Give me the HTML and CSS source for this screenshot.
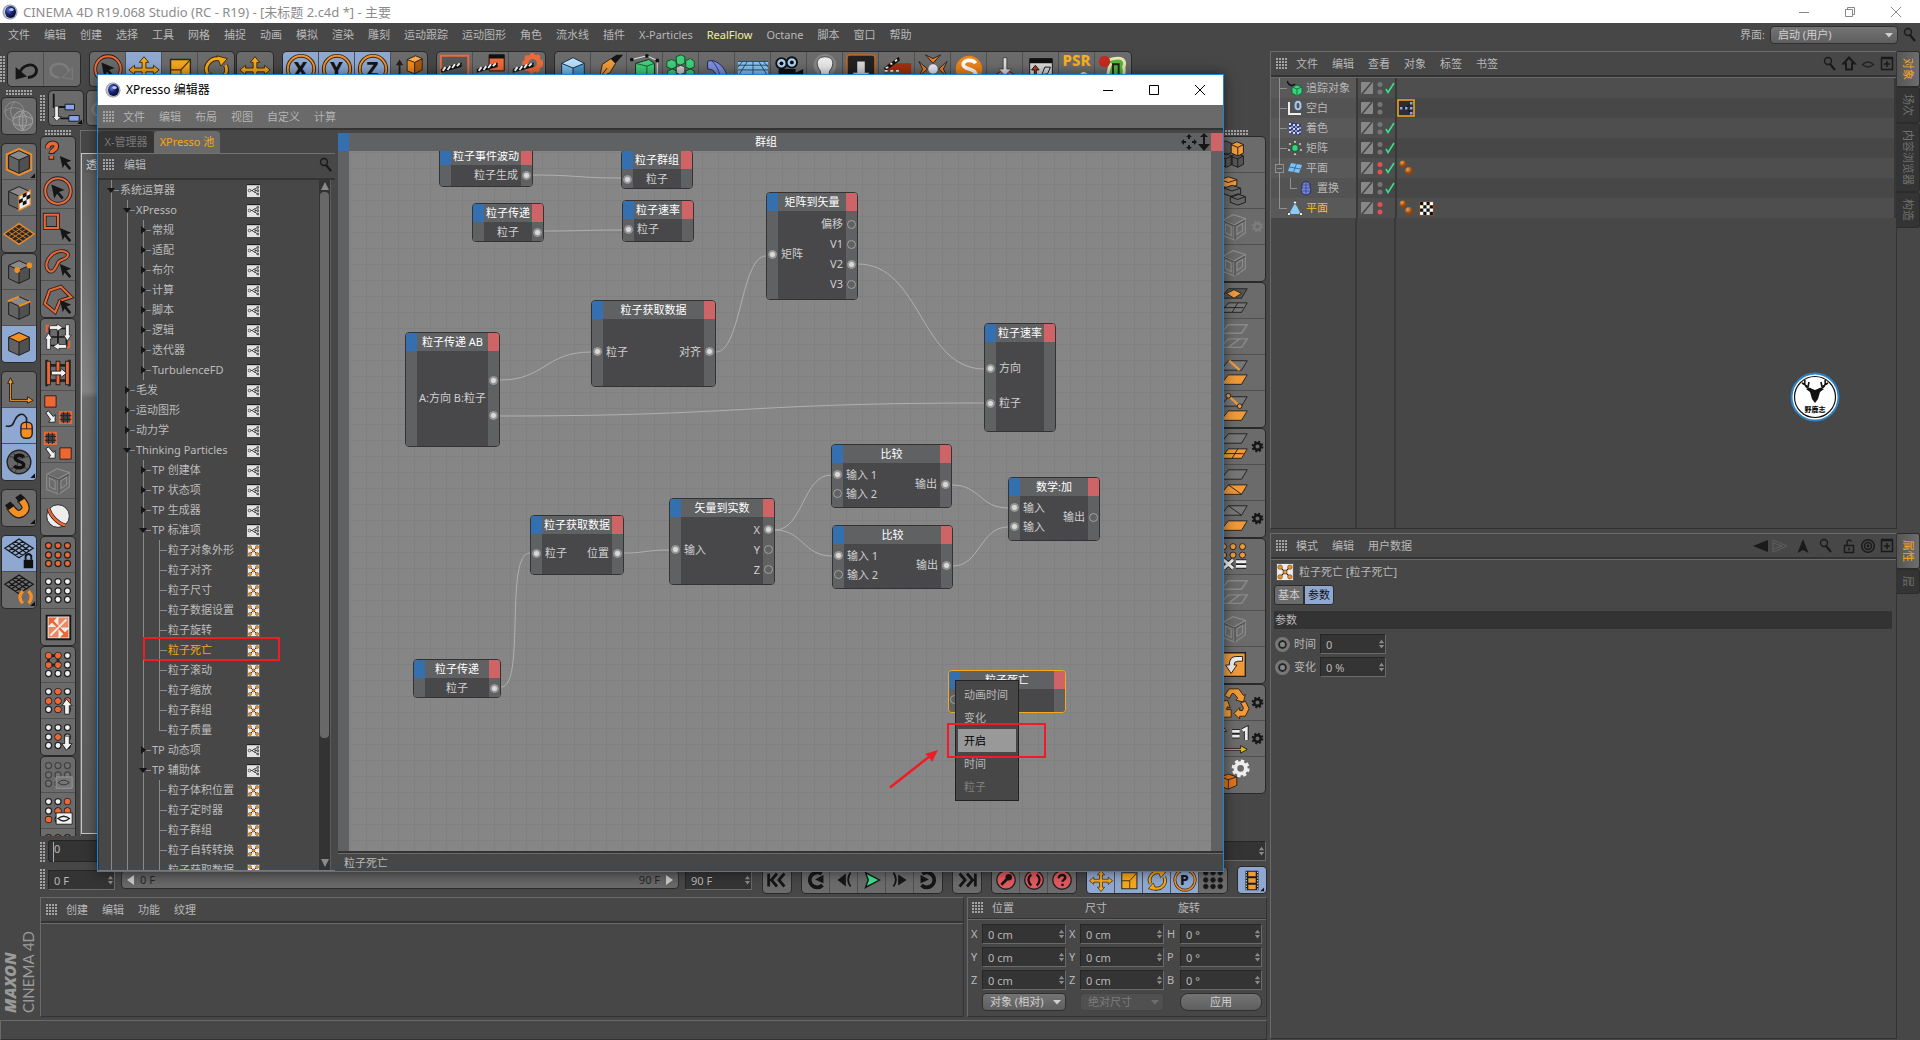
FILE: index.html
```html
<!DOCTYPE html>
<html lang="zh-CN">
<head>
<meta charset="utf-8">
<title>CINEMA 4D R19.068 Studio</title>
<link rel="stylesheet" href="styles.css">
</head>
<body>
<svg class="sprite" width="0" height="0" aria-hidden="true">
  <defs>
    <radialGradient id="g-logo" cx=".35" cy=".35" r=".7"><stop offset="0" stop-color="#5a78d8"/><stop offset=".5" stop-color="#1b2470"/><stop offset="1" stop-color="#05082c"/></radialGradient>
    <radialGradient id="g-steel"><stop offset=".6" stop-color="#e8eaf2"/><stop offset="1" stop-color="#8c90a0"/></radialGradient>
    <radialGradient id="g-ball" cx=".35" cy=".3"><stop offset="0" stop-color="#f0a050"/><stop offset="1" stop-color="#8a4410"/></radialGradient>
  </defs>
  <symbol id="c4d" viewBox="0 0 16 16"><circle cx="8" cy="8" r="7.500" fill="url(#g-steel)"/><ellipse cx="8.500" cy="8" rx="5.500" ry="6" fill="url(#g-logo)"/><ellipse cx="9.500" cy="5.500" rx="2.200" ry="1.500" fill="#b9c9f5"/></symbol>
  <symbol id="min" viewBox="0 0 12 12"><path d="M1 6.500h10" stroke="currentColor"/></symbol>
  <symbol id="max" viewBox="0 0 12 12"><path d="M1.500 1.500h9v9h-9z" fill="none" stroke="currentColor"/></symbol>
  <symbol id="restore" viewBox="0 0 12 12"><path d="M1.500 3.500h7v7h-7zM3.500 3V1.500h7v7H9" fill="none" stroke="currentColor"/></symbol>
  <symbol id="close" viewBox="0 0 12 12"><path d="M1 1l10 10M11 1L1 11" stroke="currentColor"/></symbol>
  <symbol id="find" viewBox="0 0 16 16"><circle cx="6" cy="5" r="3.500" fill="none" stroke="#1a1a1a" stroke-width="1.400"/><path d="M8 8l5 6" stroke="#1a1a1a" stroke-width="2.200"/></symbol>
  <symbol id="home" viewBox="0 0 16 16"><path d="M8 1.500l5.500 6H11v6H5v-6H2.500z" fill="none" stroke="#1a1a1a" stroke-width="2"/></symbol>
  <symbol id="eye" viewBox="0 0 16 16"><path d="M2.500 8.500q5.500-5 11 0q-5.500 5-11 0z" fill="none" stroke="#222" stroke-width="1.200"/></symbol>
  <symbol id="plus" viewBox="0 0 16 16"><path d="M2.500 2.500h11v11h-11zM2 1.500h12M8 5v6M5 8h6" fill="none" stroke="#1a1a1a" stroke-width="1.500"/></symbol>
  <symbol id="tri-l" viewBox="0 0 16 16"><path d="M15 2v12L0 8z" fill="#1a1a1a"/></symbol>
  <symbol id="tri-ghost" viewBox="0 0 16 16"><path d="M1 2v12l14-6zM1 5l9 3-9 3" fill="none" stroke="#5e5e5e"/></symbol>
  <symbol id="tri-up" viewBox="0 0 16 16"><path d="M8 1l5.500 14L8 12l-5.500 3z" fill="#1a1a1a"/></symbol>
  <symbol id="lock" viewBox="0 0 16 16"><path d="M3.500 7.500h9v7h-9zM6 7V3.500q2.500-3 4.500 0M8 9.500v3" fill="none" stroke="#1a1a1a" stroke-width="1.400"/></symbol>
  <symbol id="target" viewBox="0 0 16 16"><g fill="none" stroke="#1a1a1a" stroke-width="1.500"><circle cx="8" cy="8" r="6.300"/><circle cx="8" cy="8" r="3.500"/></g><circle cx="8" cy="8" r="1.400" fill="#1a1a1a"/></symbol>
  <symbol id="spin" viewBox="0 0 8 12"><path d="M4 1l3 4H1zM4 11l3-4H1z" fill="#8a8a8a"/></symbol>
  <symbol id="drop" viewBox="0 0 10 6"><path d="M1 1h8L5 5.500z" fill="currentColor"/></symbol>
  <symbol id="xp" viewBox="0 0 13 13"><path fill="#e4e4e4" d="M0 0h13v13H0z"/><path fill="#222" d="M0 0h13v1.200H0z"/><path d="M3 6.500h3l5-3.500M6 6.500l5 4M6 6.500h5" stroke="#333" fill="none" stroke-width=".8"/><g fill="#eee" stroke="#222" stroke-width=".7"><circle cx="2.500" cy="6.500" r="1.300"/><path d="M5 6.500l3-2v4z"/><path d="M10 2.600h1.600v1.600H10zM10 5.800h1.600v1.600H10zM10 9.200h1.600v1.600H10z"/></g></symbol>
  <symbol id="tp" viewBox="0 0 13 13"><path fill="#ededed" stroke="#555" stroke-width=".8" d="M.4.400h12.200v12.200H.4z"/><path d="M3 3l7 7M10 3l-7 7" stroke="#222" stroke-width=".9"/><g fill="#e8922a" stroke="#5a3408" stroke-width=".4"><circle cx="3" cy="3" r="1.600"/><circle cx="10" cy="3" r="1.600"/><circle cx="6.500" cy="6.500" r="1.500"/><circle cx="3" cy="10" r="1.600"/><circle cx="10" cy="10" r="1.600"/></g></symbol>

  <!-- top toolbar -->
  <symbol id="undo" viewBox="0 0 36 36"><path d="M11 23c2-9 15-13 18-5 1 6-4 9-9 9" fill="none" stroke="#161616" stroke-width="3"/><path d="M7 16v13l12-3z" fill="#161616"/></symbol>
  <symbol id="redo" viewBox="0 0 36 36"><g opacity=".5" fill="none" stroke="#909090"><path d="M25 20c-2-9-16-10-19-2-1 6 4 9 9 9" stroke-width="2.500"/><path d="M29 17v12l-11-2z"/></g></symbol>
  <symbol id="sel" viewBox="0 0 36 36"><circle cx="18" cy="18" r="13.500" fill="none" stroke="#222" stroke-width="4"/><circle cx="18" cy="18" r="13.500" fill="none" stroke="#ee6a3a" stroke-width="2.200"/><path d="M11 11l14 6-6 2 5 6-2 2-5-6-3 5z" fill="#161616"/></symbol>
  <symbol id="move" viewBox="0 0 36 36"><path d="M18 5l5 6h-3v6h8v-3l6 5-6 5v-3h-8v7h3l-5 6-5-6h3v-7H8v3l-6-5 6-5v3h8v-6h-3z" fill="#f6a81c" stroke="#3a2a08"/></symbol>
  <symbol id="scale" viewBox="0 0 36 36"><path d="M8 8h21v22H8z" fill="#f6a81c" stroke="#2a2a2a" stroke-width="1.500"/><path d="M8 19h11v11M19 19l10-11" fill="none" stroke="#4a3208" stroke-width="1.300"/></symbol>
  <symbol id="rot" viewBox="0 0 36 36"><g fill="none" stroke="#3a2a08" stroke-width="5"><path d="M9 23A11 11 0 0 1 23 8M28 14A11 11 0 0 1 14 29"/></g><path d="M19 4l11 3-7 8zM17 33L6 30l7-8z" fill="#f6a81c" stroke="#3a2a08"/><g fill="none" stroke="#f6a81c" stroke-width="3"><path d="M9 23A11 11 0 0 1 23 8M28 14A11 11 0 0 1 14 29"/></g></symbol>
  <symbol id="ring" viewBox="0 0 36 36"><circle cx="18" cy="18" r="14" fill="none" stroke="#3a2a08" stroke-width="4"/><circle cx="18" cy="18" r="14" fill="none" stroke="#f09030" stroke-width="2"/></symbol>
  <symbol id="ocube" viewBox="0 0 36 36"><path d="M8 8l4 6H9v14H7V14H4z" fill="#222"/><path d="M16 8l9-4 7 3-8 4z" fill="#ffa94a"/><path d="M16 8l8 3v12l-8-3z" fill="#f08a1e"/><path d="M24 11l8-4v12l-8 4z" fill="#b05a08"/><path d="M16 8l9-4 7 3v12l-8 4-8-3zM16 8l8 3v12M24 11l8-4" fill="none" stroke="#222"/></symbol>
  <symbol id="clap" viewBox="0 0 36 36"><path d="M3 4h29v26H3z" fill="#585858" stroke="#ee6a3a" stroke-width="2"/><path d="M3 18l22-7v5L3 22z" fill="#111"/><path d="M5 20l3-4M10 19l3-4M15 17l3-4M20 15l3-3" stroke="#fff" stroke-width="2"/></symbol>
  <symbol id="clap2" viewBox="0 0 36 36"><path d="M16 3h16v17H16z" fill="#ee6a3a" stroke="#111"/><path d="M16 3h16v4H16z" fill="#111"/><path d="M3 18l22-7v5L3 22z" fill="#111"/><path d="M5 20l3-4M10 19l3-4M15 17l3-4M20 15l3-3" stroke="#fff" stroke-width="2"/></symbol>
  <symbol id="clap3" viewBox="0 0 36 36"><circle cx="24" cy="12" r="7" fill="none" stroke="#ee6a3a" stroke-width="5"/><circle cx="24" cy="12" r="9.500" fill="none" stroke="#ee6a3a" stroke-width="3" stroke-dasharray="4 3"/><path d="M3 18l22-7v5L3 22z" fill="#111"/><path d="M5 20l3-4M10 19l3-4M15 17l3-4M20 15l3-3" stroke="#fff" stroke-width="2"/></symbol>
  <symbol id="bcube" viewBox="0 0 36 36"><path d="M6 12l12-6 12 6-12 5z" fill="#b9e0fb"/><path d="M6 12l12 5v15L6 26z" fill="#79bff0"/><path d="M30 12l-12 5v15l12-6z" fill="#4f97cf"/><path d="M6 12l12-6 12 6v14l-12 6-12-6zM6 12l12 5 12-5M18 17v15" fill="none" stroke="#1c2c3a"/></symbol>
  <symbol id="pen" viewBox="0 0 36 36"><path d="M8 27l3-14 9-6 5 5-6 10z" fill="#f09a3a" stroke="#222"/><path d="M20 7l6-4h7l-8 9z" fill="#161616"/><path d="M9 26l7-9" stroke="#222"/></symbol>
  <symbol id="gcube" viewBox="0 0 36 36"><path d="M8 12l14-4 6 4v14l-8 5-12-4z" fill="#3fd07a" stroke="#222"/><path d="M8 12l12 3 8-3M20 15v15" fill="none" stroke="#175a30"/><path d="M4 8l16-4 11 5v16l-12 7" fill="none" stroke="#eee"/><g fill="#111"><circle cx="4" cy="8" r="2"/><circle cx="20" cy="4" r="2"/><circle cx="31" cy="9" r="2"/></g></symbol>
  <symbol id="array" viewBox="0 0 36 36"><g fill="#3fd07a" stroke="#164a2a"><path d="M13 5l5-2 4 2v7l-5 2-4-2zM23 9l5-2 4 3v6l-5 2-4-2zM3 10l5-2 5 2v6l-5 2-5-2zM4 20l5-2 4 2v7l-5 2-4-2zM23 20l5-2 4 2v7l-5 2-4-2zM13 25l5-2 4 2v7l-5 2-4-2z"/></g><path d="M13 16l5-2 4 2v6l-5 2-4-2z" fill="#ccc" stroke="#333"/></symbol>
  <symbol id="bend" viewBox="0 0 36 36"><path d="M8 10c8-4 20 6 22 20H18C18 22 14 18 8 18z" fill="#7d8fe0" stroke="#1c2446"/><path d="M12 9c5 4 9 12 10 21" fill="none" stroke="#2c3670"/></symbol>
  <symbol id="floor" viewBox="0 0 36 36"><path d="M2 10h32v20H2z" fill="#86c5f2"/><path d="M2 10h32M2 14h32M2 19h32M2 25h32M12 10L2 26M18 10v20M24 10l10 16M7 10l-5 6M29 10l5 6" stroke="#244a68" fill="none"/></symbol>
  <symbol id="cam" viewBox="0 0 36 36"><circle cx="10" cy="12" r="5.500" fill="#a9d2f3" stroke="#111" stroke-width="2"/><circle cx="21" cy="11" r="5.500" fill="#a9d2f3" stroke="#111" stroke-width="2"/><path d="M7 18h18v4l8-4v12l-8-4v6H7z" fill="#111"/><circle cx="10" cy="12" r="2"/><circle cx="21" cy="11" r="2"/></symbol>
  <symbol id="bulb" viewBox="0 0 36 36"><circle cx="18" cy="14" r="12" fill="#fff" opacity=".18"/><path d="M18 5c10 0 10 9 5 15l-1 6h-8l-1-6C8 14 8 5 18 5z" fill="#e9e9e9" stroke="#444"/></symbol>
  <symbol id="down" viewBox="0 0 36 36"><rect x="3" y="3" width="30" height="30" rx="3" fill="#222" stroke="#b8632a" stroke-width="2"/><path d="M14 10h8v12h5l-9 8-9-8h5z" fill="#d8d8d8"/></symbol>
  <symbol id="clap4" viewBox="0 0 36 36"><path d="M8 12h25v14H8z" fill="#a33010"/><path d="M4 20h18v12H4z" fill="#555"/><path d="M4 17L20 5l1 4L6 20z" fill="#111"/><path d="M6 17l3-1M11 13l2-1M16 10l2-2M5 20h18" stroke="#eee" stroke-width="2" stroke-dasharray="3 3"/></symbol>
  <symbol id="xpart" viewBox="0 0 36 36"><circle cx="18" cy="18" r="5" fill="#e7eaf5"/><g fill="#f07a1e" stroke="#222"><path d="M10 3l8 4 8-4-8 9zM3 10l4 8-4 8 9-8zM33 10l-4 8 4 8-9-8zM10 33l8-4 8 4-8-9z"/></g></symbol>
  <symbol id="disc" viewBox="0 0 36 36"><circle cx="18" cy="18" r="14" fill="#f08418"/><path d="M25 12c-3-5-14-4-13 2 1 5 12 3 13 9 0 6-12 7-15 1" fill="none" stroke="#fff" stroke-width="4"/></symbol>
  <symbol id="drop-d" viewBox="0 0 36 36"><path d="M6 25l12-7 12 7-12 8z" fill="#e2552a" stroke="#222"/><path d="M16 6h4v12h5l-7 7-7-7h5z" fill="#ddd" stroke="#444"/></symbol>
  <symbol id="panel" viewBox="0 0 36 36"><path d="M6 7h24v24H6z" fill="#d8d8d8" stroke="#111"/><path d="M6 7h24v5H6z" fill="#111"/><path d="M11 30V19H8l4-5 4 5h-3v11z" fill="#c03a1a" stroke="#111"/><path d="M19 24l3-8h6l-3 7z" fill="none" stroke="#111"/></symbol>
  <symbol id="char" viewBox="0 0 36 36"><path d="M14 6h14c6 6 4 20 0 26H12z" fill="#52b83a"/><path d="M10 10c14-6 22-4 20 5M29 14c2 8 0 14-3 18M16 12c-4 6-2 12-6 20" fill="none" stroke="#f0e2b8" stroke-width="3"/><circle cx="9" cy="10" r="6" fill="#c42a20"/><path d="M18 13h6v14h-6z" fill="none" stroke="#222" stroke-width="2"/></symbol>

  <!-- left rails -->
  <symbol id="globe" viewBox="0 0 36 36"><g fill="none" stroke="#909090"><circle cx="13" cy="13" r="10"/><path d="M3 13q10-8 20 0M13 3q-8 10 0 20"/></g><g fill="#777" stroke="#a2a2a2"><circle cx="22" cy="23" r="10.500"/><path d="M12 21q10-6 20 0M12 26q10 5 20 0M22 13q-8 10 0 20M22 13q8 10 0 20M22 13v20" fill="none"/></g></symbol>
  <symbol id="hier" viewBox="0 0 36 36"><path d="M5 3v14h14M12 29h10" fill="none" stroke="#161616" stroke-width="2"/><path d="M17 14h10v6H17zM21 26h11v6H21z" fill="#8aa4ee" stroke="#161616"/><path d="M6 16h4v11h3l-5 5-4-5h2z" fill="#eee" stroke="#333"/><path d="M35 35v-5l-5 5z" fill="#111"/></symbol>
  <symbol id="box" viewBox="0 0 36 36"><path d="M7 11l11-5 11 5-11 5z" fill="#8a8a8a"/><path d="M7 11l11 5v14L7 25z" fill="#636363"/><path d="M29 11l-11 5v14l11-5z" fill="#505050"/><path d="M7 11l11-5 11 5v14l-11 5-11-5zM7 11l11 5 11-5M18 16v14" fill="none" stroke="#1c1c1c"/></symbol>
  <symbol id="m-obj" viewBox="0 0 36 36"><use href="#box"/><path d="M5 10l13-6 13 6v16l-13 6-13-6z" fill="none" stroke="#f08c28" stroke-width="2"/><path d="M35 35v-5l-5 5z" fill="#111"/></symbol>
  <symbol id="m-tex" viewBox="0 0 36 36"><use href="#box"/><path d="M18 16l12-6v15l-12 6z" fill="#eee" stroke="#f08c28" stroke-width="1.500"/><path d="M18 20l4-2v-4l4-2v4l-4 2v4l-4 2zM22 22l4-2v-4l4-2v4l-4 2v4l-4 2z" fill="#111"/></symbol>
  <symbol id="m-grid" viewBox="0 0 36 36"><path d="M2 18l16-11 16 11-16 11z" fill="#2a2a2a" stroke="#f08c28" stroke-width="1.500"/><path d="M7 15.500l15 10M11 13l15 10M14 10.500l15 10M29 15.500l-15 10M25 13l-15 10M22 10.500l-15 10" stroke="#e08020" fill="none"/></symbol>
  <symbol id="m-pt" viewBox="0 0 36 36"><use href="#box"/><circle cx="16" cy="16" r="3" fill="#f09020"/><circle cx="29" cy="11" r="3" fill="#f09020"/></symbol>
  <symbol id="m-edge" viewBox="0 0 36 36"><use href="#box"/><path d="M6 11l12-5M18 16l12-5" stroke="#f09020" stroke-width="2"/></symbol>
  <symbol id="m-poly" viewBox="0 0 36 36"><use href="#box"/><path d="M7 11l11-5 11 5-11 5z" fill="#f58f22" stroke="#222"/></symbol>
  <symbol id="axis" viewBox="0 0 36 36"><path d="M9 5l3 6h-2v17h17v-3l6 4-6 3v-2H8V11H6z" fill="#f59a2a" stroke="#222"/></symbol>
  <symbol id="mouse" viewBox="0 0 36 36"><path d="M4 18c8 2 8-4 10-7 3-6 9-8 12-1v4" fill="none" stroke="#222" stroke-width="1.800"/><rect x="20" y="14" width="12" height="17" rx="5" fill="#f58f22" stroke="#222" stroke-width="1.500"/><path d="M20 21h12M26 14v7" stroke="#222"/></symbol>
  <symbol id="snap-s" viewBox="0 0 36 36"><circle cx="18" cy="18" r="12.500" fill="#666" stroke="#222" stroke-width="1.500"/><path d="M8 12q10 4 20 0M8 26q10-6 20 0M12 8q8 10 2 21" fill="none" stroke="#333"/><path d="M23 13c-2-3-9-3-9 1s9 3 9 7-8 4-10 1" fill="none" stroke="#111" stroke-width="3.500"/><path d="M35 35v-5l-5 5z" fill="#111"/></symbol>
  <symbol id="magnet" viewBox="0 0 36 36"><path d="M8 13c5 8 10 11 15 6 4-4 2-8-4-14" fill="none" stroke="#222" stroke-width="9" transform="translate(0 3)"/><path d="M8 13c5 8 10 11 15 6 4-4 2-8-4-14" fill="none" stroke="#f58f22" stroke-width="6.500" transform="translate(0 3)"/><path d="M3 15l6-4 4 5-6 4zM14 7l6-4 4 5-6 4z" fill="#161616"/><path d="M35 35v-5l-5 5z" fill="#111"/></symbol>
  <symbol id="net" viewBox="0 0 36 36"><path d="M3 12l15-10 15 10-15 10zM7 9.500l15 10M11 7l15 10M14 4.500l15 10M29 9.500l-15 10M25 7l-15 10M22 4.500l-15 10" stroke="#161616" stroke-width="1.300" fill="none"/></symbol>
  <symbol id="net-lock" viewBox="0 0 36 36"><use href="#net"/><path d="M23 24h10v9H23z" fill="#111"/><path d="M25 24v-4q3-4 6 0v4" fill="none" stroke="#111" stroke-width="2"/></symbol>
  <symbol id="net-mag" viewBox="0 0 36 36"><use href="#net"/><path d="M22 19q-6 7 0 13M28 19q6 7 0 13" fill="none" stroke="#f58f22" stroke-width="3.500"/><path d="M35 35v-5l-5 5z" fill="#111"/></symbol>
  <symbol id="ptr" viewBox="0 0 36 36"><path d="M20 19l12 5-5 2 5 6-2 2-5-6-2 4z" fill="#161616"/></symbol>
  <symbol id="help-p" viewBox="0 0 36 36"><path d="M7 11c0-7 11-7 9-1-1 3-5 3-5 7M11 19v4" fill="none" stroke="#222" stroke-width="6"/><path d="M7 11c0-7 11-7 9-1-1 3-5 3-5 6M11 19v3" fill="none" stroke="#ee6632" stroke-width="4"/><use href="#ptr"/></symbol>
  <symbol id="rect-p" viewBox="0 0 36 36"><path d="M4 5h14v14H4z" fill="none" stroke="#222" stroke-width="4"/><path d="M4 5h14v14H4z" fill="none" stroke="#ee6632" stroke-width="2.200"/><use href="#ptr"/></symbol>
  <symbol id="lasso" viewBox="0 0 36 36"><path d="M13 8c8-5 18-2 15 3s-8 2-10 7 -6 12-10 8-3-12 5-18z" fill="none" stroke="#222" stroke-width="4"/><path d="M13 8c8-5 18-2 15 3s-8 2-10 7 -6 12-10 8-3-12 5-18z" fill="none" stroke="#ee6632" stroke-width="2.200"/><use href="#ptr"/></symbol>
  <symbol id="poly-p" viewBox="0 0 36 36"><path d="M9 9l12-4 11 11-12 4-5 12-11-9z" fill="none" stroke="#222" stroke-width="4"/><path d="M9 9l12-4 11 11-12 4-5 12-11-9z" fill="none" stroke="#ee6632" stroke-width="2.200"/><use href="#ptr"/></symbol>
  <symbol id="loop" viewBox="0 0 36 36"><path d="M9 9h18v18H9zM9 18h18M18 9v18" fill="none" stroke="#161616" stroke-width="1.800"/><path d="M6 13v-7h6M30 22v7h-6" fill="none" stroke="#ee6632" stroke-width="2"/><g fill="#f2f2f2" stroke="#222" stroke-width=".8"><path d="M9 6h8V4l6 4-6 4v-2H9zM26 5h4v11h2l-4 6-4-6h2zM27 30h-8v2l-6-4 6-4v2h8zM6 31h4V20h2l-4-6-4 6h2z"/></g></symbol>
  <symbol id="ringsel" viewBox="0 0 36 36"><path d="M6 10h24M6 26h24M6 4v28M30 4v28" stroke="#222" stroke-width="3"/><path d="M8 5v26M18 5v26M28 5v26" stroke="#222" stroke-width="5"/><path d="M8 6v24M18 6v24M28 6v24" stroke="#ee6632" stroke-width="3"/><path d="M11 16h10v-3l6 5-6 5v-3H11z" fill="#f2f2f2" stroke="#222"/></symbol>
  <symbol id="grow" viewBox="0 0 36 36"><path d="M4 4h12v12H4z" fill="#ee6632" stroke="#222"/><path d="M20 21h12v12H20z" fill="#444" stroke="#ee6632" stroke-width="2"/><path d="M24 21v12M28 21v12M20 25h12M20 29h12" stroke="#222"/><path d="M5 22l3-2 5 6 2-2v8H8l2-3z" fill="#eee" stroke="#222"/></symbol>
  <symbol id="shrink" viewBox="0 0 36 36"><path d="M20 21h12v12H20z" fill="#ee6632" stroke="#222"/><path d="M4 5h12v12H4z" fill="#444" stroke="#ee6632" stroke-width="2"/><path d="M8 5v12M12 5v12M4 9h12M4 13h12" stroke="#222"/><path d="M5 22l3-2 5 6 2-2v8H8l2-3z" fill="#eee" stroke="#222"/></symbol>
  <symbol id="ghost" viewBox="0 0 36 36"><path d="M6 11l11-6 13 4v15l-11 8-13-5zM6 11l12 5 12-7M18 16v15M9 15v9l6 3v-9zM21 18v8l6-4v-8z" fill="none" stroke="#8c8c8c" stroke-width="1.200"/><path d="M7 12l12 5 11-6M19 17v15" stroke="#484848" fill="none"/></symbol>
  <symbol id="ball" viewBox="0 0 36 36"><circle cx="18" cy="17" r="12" fill="#ededed" stroke="#222"/><path d="M8 9c2 8 10 16 18 18" stroke="#222" stroke-width="4" fill="none"/><path d="M8 9c2 8 10 16 18 18" stroke="#ee6632" stroke-width="2.400" fill="none"/></symbol>
  <symbol id="dots" viewBox="0 0 36 36"><g stroke="#222" stroke-width="1.300"><circle cx="8" cy="8" r="3.200"/><circle cx="18" cy="8" r="3.200"/><circle cx="28" cy="8" r="3.200"/><circle cx="8" cy="18" r="3.200"/><circle cx="18" cy="18" r="3.200"/><circle cx="28" cy="18" r="3.200"/><circle cx="8" cy="27" r="3.200"/><circle cx="18" cy="27" r="3.200"/><circle cx="28" cy="27" r="3.200"/></g></symbol>
  <symbol id="fit" viewBox="0 0 36 36"><path d="M6 6h25v25H6z" fill="#ececec" stroke="#161616" stroke-width="2"/><path d="M8 18l10.500 0L8 29zM18.500 8v10.500L29 8zM18.500 18.500H29V8zM8 29h10.500V18.500z" fill="#ee6632" opacity=".75"/><path d="M10 10l17 17" stroke="#ee6632" stroke-width="2.500"/><path d="M27 10L10 27" stroke="#ececec" stroke-width="2"/><path d="M8 8h9l-9 9zM29 29h-9l9-9z" fill="#ee6632"/></symbol>
  <symbol id="d-loop" viewBox="0 0 36 36"><use href="#dots" fill="#f0f0f0"/><path d="M8 8h10v10H8z" fill="none" stroke="#222" stroke-width="3"/><g fill="#ee6632"><circle cx="8" cy="8" r="3"/><circle cx="18" cy="8" r="3"/><circle cx="8" cy="18" r="3"/><circle cx="18" cy="18" r="3"/></g></symbol>
  <symbol id="d-up" viewBox="0 0 36 36"><use href="#dots" fill="#f0f0f0"/><g fill="#ee6632"><circle cx="18" cy="8" r="3"/><circle cx="8" cy="18" r="3"/><circle cx="18" cy="18" r="3"/><circle cx="28" cy="18" r="3"/><circle cx="18" cy="27" r="3"/></g><path d="M25 32h5V23h3l-6-7-5 7h3z" fill="#f2f2f2" stroke="#222"/></symbol>
  <symbol id="d-down" viewBox="0 0 36 36"><use href="#dots" fill="#f0f0f0"/><circle cx="18" cy="18" r="3" fill="#ee6632"/><path d="M25 17h5v8h3l-6 7-5-7h3z" fill="#f2f2f2" stroke="#222"/></symbol>
  <symbol id="d-ghost" viewBox="0 0 36 36"><use href="#dots" fill="#777" opacity=".55"/><path d="M16 20h17v12H16z" fill="#777" stroke="#999"/><path d="M18 26q6-5 12 0-6 5-12 0z" fill="none" stroke="#333"/></symbol>
  <symbol id="d-eye" viewBox="0 0 36 36"><use href="#dots" fill="#f0f0f0"/><g fill="#ee6632"><circle cx="28" cy="8" r="3"/><circle cx="18" cy="18" r="3"/><circle cx="28" cy="18" r="3"/><circle cx="8" cy="27" r="3"/></g><path d="M16 20h17v12H16z" fill="#f2f2f2" stroke="#222"/><path d="M18 26q6-5 12 0-6 5-12 0z" fill="none" stroke="#222" stroke-width="1.500"/></symbol>

  <!-- right rail -->
  <symbol id="cubes" viewBox="0 0 36 36"><g stroke="#1c1c1c"><path d="M3 6l6-3 7 3v9l-6 3-7-3zM3 19l6-3 7 3v9l-6 3-7-3zM15 19l6-3 7 3v9l-6 3-7-3z" fill="#555"/><path d="M15 7l6-3 7 3v9l-6 3-7-3z" fill="#f09a3a"/><path d="M15 7l7 3 6-3M22 10v9M15 20l7 2 6-3M22 22v9M3 20l6 2 7-3M9 22v9" fill="none"/></g></symbol>
  <symbol id="steps" viewBox="0 0 36 36"><g stroke="#1c1c1c"><path d="M3 6l9-3 9 3v6l-9 3-9-3z" fill="#f09a3a"/><path d="M3 6l9 3 9-3" fill="none"/><path d="M7 15l9-3 9 3v6l-9 3-9-3zM14 24l8-3 8 3v6l-8 3-8-3z" fill="#666"/><path d="M7 15l9 3 9-3M14 24l8 3 8-3" fill="none"/></g></symbol>
  <symbol id="q-w" viewBox="0 0 36 36"><path d="M12 5h20l-6 10H4z" fill="#555" stroke="#222"/><path d="M18 6l8 4-8 5-8-5z" fill="#f09a3a" stroke="#222"/><path d="M12 20h20l-6 10H4zM8 25h20M22 20l-6 10" fill="#777" stroke="#222"/></symbol>
  <symbol id="q-g" viewBox="0 0 36 36"><path d="M12 5h20l-6 9H4zM12 20h20l-6 9H4zM12 29l12-9" fill="none" stroke="#8a8a8a" stroke-width="1.500"/></symbol>
  <symbol id="q-l" viewBox="0 0 36 36"><path d="M12 5h20l-6 10H4z" fill="#777" stroke="#222"/><path d="M13 5l11 10" stroke="#f09a3a" stroke-width="2.500"/><path d="M12 20h20l-6 10H4z" fill="#f09a3a" stroke="#222"/></symbol>
  <symbol id="q-p" viewBox="0 0 36 36"><use href="#q-l"/><circle cx="12" cy="4" r="2.500" fill="#f09a3a" stroke="#222"/><circle cx="24" cy="15" r="2.500" fill="#f09a3a" stroke="#222"/></symbol>
  <symbol id="q-4" viewBox="0 0 36 36"><path d="M12 4h20l-6 10H4z" fill="#777" stroke="#222"/><path d="M12 20h20l-6 10H4zM8 25h20M22 20l-6 10" fill="#f09a3a" stroke="#222"/></symbol>
  <symbol id="q-t" viewBox="0 0 36 36"><path d="M12 4h20l-6 10H4z" fill="#777" stroke="#222"/><path d="M12 20h20l-6 10H4zM12 20l14 10" fill="#f09a3a" stroke="#222"/></symbol>
  <symbol id="q-u" viewBox="0 0 36 36"><path d="M12 4h20l-6 10H4zM12 4l14 10" fill="#777" stroke="#222"/><path d="M12 20h20l-6 10H4z" fill="#f09a3a" stroke="#222"/></symbol>
  <symbol id="q-x" viewBox="0 0 36 36"><g fill="#f09a3a" stroke="#222"><circle cx="7" cy="7" r="3.200"/><circle cx="17" cy="7" r="3.200"/><circle cx="27" cy="7" r="3.200"/><circle cx="7" cy="16" r="3.200"/><circle cx="17" cy="16" r="3.200"/><circle cx="27" cy="16" r="3.200"/></g><path d="M7 21l10 9M17 21L7 30M20 23h11M20 28h11" stroke="#222" stroke-width="5"/><path d="M7 21l10 9M17 21L7 30M20 23h11M20 28h11" stroke="#eee" stroke-width="3"/></symbol>
  <symbol id="q-n" viewBox="0 0 36 36"><path d="M4 5h26v25H4z" fill="#f09a3a" stroke="#222" stroke-width="1.500"/><path d="M27 9H20q-7 0-7 9H9l6 9 6-9h-3q0-4 4-4h5z" fill="#eee" stroke="#222"/></symbol>
  <symbol id="recy" viewBox="0 0 36 36"><g fill="#f09a3a" stroke="#3a2408"><path d="M8 10l5-7h10l5 7 2-1-2 8-8-2 2-2-4-5h-2l-3 5zM30 16l4 8-4 8h-6v3l-6-6 6-6v3h3l1-3-3-5zM15 33H6l-5-8 4-7-2-1 8-2 3 8-3-1-1 3h5z"/></g></symbol>
  <symbol id="q-1" viewBox="0 0 36 36"><path d="M6 4l4 6H7v18h18v-3l7 4-7 4v-3H5V10H2z" fill="#f6b01c" stroke="#222"/><path d="M16 10h8M16 15h8M27 9l4-2v12" stroke="#222" stroke-width="5" fill="none"/><path d="M16 10h8M16 15h8M27 9l4-2v12" stroke="#eee" stroke-width="3" fill="none"/></symbol>
  <symbol id="gear" viewBox="0 0 16 16"><circle cx="8" cy="8" r="4" fill="none" stroke="currentColor" stroke-width="3"/><circle cx="8" cy="8" r="6" fill="none" stroke="currentColor" stroke-width="2.500" stroke-dasharray="2.500 2.210"/></symbol>
  <symbol id="q-gear" viewBox="0 0 36 36"><path d="M4 20l8-3 9 3v9l-9 4-8-3z" fill="#e0761a" stroke="#222"/><path d="M4 20l8 3 9-3M12 23v10" stroke="#222" fill="none"/><circle cx="25" cy="11" r="5.500" fill="none" stroke="#efefef" stroke-width="4"/><circle cx="25" cy="11" r="8" fill="none" stroke="#efefef" stroke-width="3" stroke-dasharray="3.500 2.780"/></symbol>

  <!-- transport -->
  <symbol id="t-start" viewBox="0 0 28 26"><path d="M5 6v14M14 6l-6 7 6 7M22 6l-6 7 6 7" stroke="#161616" stroke-width="3" fill="none"/></symbol>
  <symbol id="t-end" viewBox="0 0 28 26"><path d="M23 6v14M14 6l6 7-6 7M6 6l6 7-6 7" stroke="#161616" stroke-width="3" fill="none"/></symbol>
  <symbol id="t-back" viewBox="0 0 28 26"><path d="M20 6.500a8 8 0 1 0 1 12" stroke="#161616" stroke-width="4" fill="none"/><path d="M13 12.500l9-5v9z" fill="#161616"/></symbol>
  <symbol id="t-fwd" viewBox="0 0 28 26"><path d="M8 6.500a8 8 0 1 1-1 12" stroke="#161616" stroke-width="4" fill="none"/><path d="M15 12.500L6 7.500v9z" fill="#161616"/></symbol>
  <symbol id="t-prev" viewBox="0 0 28 26"><path d="M16 6v14l-9-7z" fill="#161616"/><path d="M21 5q-5 8 0 15" stroke="#161616" stroke-width="2" fill="none"/></symbol>
  <symbol id="t-next" viewBox="0 0 28 26"><path d="M12 7v12l9-6z" fill="#161616"/><path d="M7 5q5 8 0 15" stroke="#161616" stroke-width="2" fill="none"/></symbol>
  <symbol id="t-play" viewBox="0 0 28 26"><path d="M7 5l15 8-15 8 3-8z" fill="#3ce28c" stroke="#161616" stroke-width="1.500"/></symbol>
  <symbol id="t-disc" viewBox="0 0 28 26"><circle cx="14" cy="13" r="10" fill="#e2595e" stroke="#222" stroke-width="1.500"/></symbol>
  <symbol id="t-key" viewBox="0 0 28 26"><use href="#t-disc"/><path d="M9 18l7-7" stroke="#161616" stroke-width="3"/><circle cx="17" cy="10" r="3.500" fill="#161616"/></symbol>
  <symbol id="t-auto" viewBox="0 0 28 26"><use href="#t-disc"/><path d="M11 7q-6 6 0 12M17 7q6 6 0 12" stroke="#161616" stroke-width="2.500" fill="none"/></symbol>
  <symbol id="t-q" viewBox="0 0 28 26"><use href="#t-disc"/><path d="M10.500 11c0-5 8-4 7 0-1 2-3 2-3 4M14.500 17v2.500" stroke="#161616" stroke-width="2.600" fill="none"/></symbol>
  <symbol id="film" viewBox="0 0 28 26"><path d="M7 3h14v21H7z" fill="#1c1c1c"/><path d="M10 4h8v5h-8zM10 11h8v5h-8zM10 18h8v5h-8z" fill="#f09a3a"/><path d="M8 4v20M20 4v20" stroke="#ddd" stroke-dasharray="1.500 1.500"/><path d="M27 25v-4l-4 4z" fill="#111"/></symbol>

  <!-- object manager -->
  <symbol id="o-trace" viewBox="0 0 16 16"><path d="M0 1q3 7 8 3" stroke="#111" stroke-width="1.500" fill="none"/><path d="M5 7l5-2 5 2v6l-5 3-5-3z" fill="#36d47c" stroke="#145a34" stroke-width=".8"/><path d="M5 7l5 2 5-2M10 9v6" stroke="#145a34" stroke-width=".8" fill="none"/></symbol>
  <symbol id="o-null" viewBox="0 0 16 16"><path d="M2 2v12h12" stroke="#eee" stroke-width="2" fill="none"/><ellipse cx="11" cy="5.500" rx="2.500" ry="3.800" fill="none" stroke="#a4c8f4" stroke-width="2"/></symbol>
  <symbol id="o-shade" viewBox="0 0 16 16"><path d="M2 2l12 2v11L2 13z" fill="#3a4474"/><path d="M3 3v11M7 4v11M11 4v11" stroke="#cdd6f8" stroke-width="2" stroke-dasharray="2 2"/><path d="M5 4v10M9 4v10M13 5v9" stroke="#8a9ae0" stroke-width="2" stroke-dasharray="2 2" stroke-dashoffset="2"/></symbol>
  <symbol id="o-matrix" viewBox="0 0 16 16"><path d="M5 5.500l3-1 3 1v5l-3 1-3-1z" fill="#36d47c" stroke="#145a34"/><g fill="#ccc" stroke="#222" stroke-width=".5"><circle cx="8" cy="1.800" r="1.500"/><circle cx="13" cy="4" r="1.500"/><circle cx="14" cy="10" r="1.500"/><circle cx="8" cy="14.200" r="1.500"/><circle cx="2" cy="10" r="1.500"/><circle cx="3" cy="4" r="1.500"/></g></symbol>
  <symbol id="o-plane" viewBox="0 0 16 16"><path d="M4 3l11 2-3 8L1 11z" fill="#7cc0f6"/><path d="M2.500 7l11 2M9.500 4l-3 8" stroke="#2a5c88" stroke-width=".8"/></symbol>
  <symbol id="o-disp" viewBox="0 0 16 16"><path d="M4 4q4-5 8 0v3q2 3 0 6-4 4-8 0-2-3 0-6z" fill="#7488dc" stroke="#28305e"/><path d="M4 5h8M4 8h8M4 11h8M8 2v12" stroke="#34407c" stroke-width=".7"/></symbol>
  <symbol id="o-tri" viewBox="0 0 16 16"><path d="M8 3l6 11H2z" fill="#8ccaf8"/><g fill="#fff" stroke="#222" stroke-width=".6"><circle cx="8" cy="2.500" r="1.600"/><circle cx="2" cy="14" r="1.600"/><circle cx="14" cy="14" r="1.600"/></g></symbol>
  <symbol id="o-slash" viewBox="0 0 12 12"><rect width="12" height="12" rx="1" fill="#888"/><path d="M1 12L11 0" stroke="#444" stroke-width="1.500"/></symbol>
  <symbol id="o-vis" viewBox="0 0 6 14"><circle cx="3" cy="3.500" r="2.500"/><circle cx="3" cy="11" r="2.500"/></symbol>
  <symbol id="o-ok" viewBox="0 0 10 12"><path d="M1 7l2 3.500L9 1" fill="none" stroke="#38e08a" stroke-width="1.600"/></symbol>
  <symbol id="o-xp" viewBox="0 0 18 18"><path d="M1 1h16v16H1z" fill="#2c2c34" stroke="#f5a81c" stroke-width="1.500"/><path d="M4 9h5l5-5M9 9l5 5" stroke="#111" fill="none"/><path d="M3 8h2.500v2.500H3zM8 8h2.500v2.500H8zM13 3h2.500v2.500H13zM13 8h2.500v2.500H13zM13 13h2.500v2.500H13z" fill="#8aa4f0"/></symbol>
  <symbol id="o-balls" viewBox="0 0 18 18"><circle cx="6" cy="5" r="3.600" fill="url(#g-ball)"/><circle cx="12" cy="12" r="4" fill="url(#g-ball)"/></symbol>
  <symbol id="o-chk" viewBox="0 0 14 14"><path d="M0 0h14v14H0z" fill="#8a4a1c"/><path d="M1 1h12v12H1z" fill="#fff"/><path d="M1 1h3v3H1zM7 1h3v3H7zM4 4h3v3H4zM10 4h3v3h-3zM1 7h3v3H1zM7 7h3v3H7zM4 10h3v3H4zM10 10h3v3h-3z" fill="#111"/></symbol>
</svg>

<header class="titlebar">
  <svg class="i16"><use href="#c4d"/></svg>
  <h1>CINEMA 4D R19.068 Studio (RC - R19) - [未标题 2.c4d *] - 主要</h1>
  <button aria-label="最小化"><svg class="i12"><use href="#min"/></svg></button>
  <button aria-label="还原"><svg class="i12"><use href="#restore"/></svg></button>
  <button aria-label="关闭"><svg class="i12"><use href="#close"/></svg></button>
</header>

<nav class="menubar">
  <button>文件</button><button>编辑</button><button>创建</button><button>选择</button><button>工具</button><button>网格</button><button>捕捉</button><button>动画</button><button>模拟</button><button>渲染</button><button>雕刻</button><button>运动跟踪</button><button>运动图形</button><button>角色</button><button>流水线</button><button>插件</button><button>X-Particles</button><button class="hot">RealFlow</button><button>Octane</button><button>脚本</button><button>窗口</button><button>帮助</button>
  <label class="push" for="layout">界面:</label>
  <span class="select layout"><select id="layout"><option>启动 (用户)</option></select><svg><use href="#drop"/></svg></span>
  <svg class="i16"><use href="#find"/></svg>
</nav>

<main class="workspace">
  <div class="stage">
    <div class="toolbar">
      <i class="grip tall"></i>
      <div class="tools"><button><svg><use href="#undo"/></svg></button><button><svg><use href="#redo"/></svg></button></div>
      <div class="tools"><button><svg><use href="#sel"/></svg></button><button class="on"><svg><use href="#move"/></svg></button><button><svg><use href="#scale"/></svg></button><button><svg><use href="#rot"/></svg></button></div>
      <div class="tools near"><button><svg><use href="#move"/></svg></button></div>
      <div class="tools"><button class="on axis"><svg><use href="#ring"/></svg><b>X</b></button><button class="on axis"><svg><use href="#ring"/></svg><b>Y</b></button><button class="on axis"><svg><use href="#ring"/></svg><b>Z</b></button><button><svg><use href="#ocube"/></svg></button></div>
      <div class="tools"><button><svg><use href="#clap"/></svg></button><button><svg><use href="#clap2"/></svg></button><button><svg><use href="#clap3"/></svg></button></div>
      <div class="tools"><button><svg><use href="#bcube"/></svg></button><button><svg><use href="#pen"/></svg></button><button><svg><use href="#gcube"/></svg></button><button><svg><use href="#array"/></svg></button><button><svg><use href="#bend"/></svg></button><button><svg><use href="#floor"/></svg></button><button><svg><use href="#cam"/></svg></button><button><svg><use href="#bulb"/></svg></button><button><svg><use href="#down"/></svg></button><button><svg><use href="#clap4"/></svg></button><button><svg><use href="#xpart"/></svg></button><button><svg><use href="#disc"/></svg></button><button><svg><use href="#drop-d"/></svg></button><button><svg><use href="#panel"/></svg></button><button class="psr">PSR<b>0</b></button><button><svg><use href="#char"/></svg></button></div>
    </div>

    <div class="deck">
      <aside class="rail first">
        <i class="grip wide"></i>
        <div class="tools"><button><svg><use href="#globe"/></svg></button></div>
        <div class="tools apart"><button><svg><use href="#m-obj"/></svg></button><button><svg><use href="#m-tex"/></svg></button><button><svg><use href="#m-grid"/></svg></button></div>
        <div class="tools"><button><svg><use href="#m-pt"/></svg></button><button><svg><use href="#m-edge"/></svg></button><button class="on"><svg><use href="#m-poly"/></svg></button></div>
        <div class="tools apart"><button><svg><use href="#axis"/></svg></button><button class="on"><svg><use href="#mouse"/></svg></button><button class="on"><svg><use href="#snap-s"/></svg></button></div>
        <div class="tools apart"><button><svg><use href="#magnet"/></svg></button></div>
        <div class="tools apart"><button class="on"><svg><use href="#net-lock"/></svg></button><button><svg><use href="#net-mag"/></svg></button></div>
        <div class="brand"><strong>MAXON</strong><span>CINEMA 4D</span></div>
      </aside>

      <div class="center">
        <div class="subbar">
          <i class="grip tall"></i>
          <div class="tools"><button><svg><use href="#hier"/></svg></button></div>
          <div class="tools"><button><svg><use href="#redo"/></svg></button></div>
        </div>
        <div class="middle">
          <aside class="rail">
            <i class="grip wide"></i>
            <div class="tools"><button><svg><use href="#help-p"/></svg></button><button><svg><use href="#sel"/></svg></button><button><svg><use href="#rect-p"/></svg></button><button><svg><use href="#lasso"/></svg></button><button><svg><use href="#poly-p"/></svg></button></div>
            <div class="tools"><button><svg><use href="#loop"/></svg></button><button><svg><use href="#ringsel"/></svg></button><button><svg><use href="#grow"/></svg></button><button><svg><use href="#shrink"/></svg></button><button><svg><use href="#ghost"/></svg></button><button><svg><use href="#ball"/></svg></button></div>
            <div class="tools"><button><svg fill="#ee6632"><use href="#dots"/></svg></button><button><svg fill="#f0f0f0"><use href="#dots"/></svg></button><button><svg><use href="#fit"/></svg></button></div>
            <div class="tools"><button><svg><use href="#d-loop"/></svg></button><button><svg><use href="#d-up"/></svg></button><button><svg><use href="#d-down"/></svg></button></div>
            <div class="tools"><button><svg><use href="#d-ghost"/></svg></button><button><svg><use href="#d-eye"/></svg></button><button><svg fill="#ee6632"><use href="#dots"/></svg></button></div>
          </aside>
          <section class="viewport"><header><i class="grip"></i></header><div class="view"><span>透</span></div></section>
          <aside class="rail right">
            <i class="grip wide"></i>
            <div class="tools"><button><svg><use href="#cubes"/></svg></button><button><svg><use href="#steps"/></svg></button><button><svg><use href="#ghost"/></svg><svg class="cog dim"><use href="#gear"/></svg></button><button><svg><use href="#ghost"/></svg></button></div>
            <div class="tools"><button><svg><use href="#q-w"/></svg></button><button><svg><use href="#q-g"/></svg></button><button><svg><use href="#q-l"/></svg></button><button><svg><use href="#q-p"/></svg></button></div>
            <div class="tools"><button><svg><use href="#q-4"/></svg><svg class="cog"><use href="#gear"/></svg></button><button><svg><use href="#q-t"/></svg></button><button><svg><use href="#q-u"/></svg><svg class="cog"><use href="#gear"/></svg></button></div>
            <div class="tools"><button><svg><use href="#q-x"/></svg></button><button><svg><use href="#q-g"/></svg></button><button><svg><use href="#ghost"/></svg></button><button><svg><use href="#q-n"/></svg></button></div>
            <div class="tools"><button><svg><use href="#recy"/></svg><svg class="cog"><use href="#gear"/></svg></button><button><svg><use href="#q-1"/></svg><svg class="cog"><use href="#gear"/></svg></button><button><svg><use href="#q-gear"/></svg></button></div>
          </aside>
        </div>

        <div class="timeline"><i class="grip tall"></i><div class="ruler"><span>0</span></div><span class="field frame"><input aria-label="当前帧" value="0 F"><svg><use href="#spin"/></svg></span></div>

        <div class="transport">
          <i class="grip tall"></i>
          <span class="field start"><input aria-label="起始帧" value="0 F"><svg><use href="#spin"/></svg></span>
          <div class="range"><i class="nib"></i><span>0 F</span><span>90 F</span><i class="nib end"></i></div>
          <span class="field start"><input aria-label="结束帧" value="90 F"><svg><use href="#spin"/></svg></span>
          <div class="tools"><button><svg><use href="#t-start"/></svg></button></div>
          <div class="tools"><button><svg><use href="#t-back"/></svg></button><button><svg><use href="#t-prev"/></svg></button><button><svg><use href="#t-play"/></svg></button><button><svg><use href="#t-next"/></svg></button><button><svg><use href="#t-fwd"/></svg></button></div>
          <div class="tools"><button><svg><use href="#t-end"/></svg></button></div>
          <div class="tools"><button><svg><use href="#t-key"/></svg></button><button><svg><use href="#t-auto"/></svg></button><button><svg><use href="#t-q"/></svg></button></div>
          <div class="tools"><button class="on"><svg><use href="#move"/></svg></button><button class="on"><svg><use href="#scale"/></svg></button><button class="on"><svg><use href="#rot"/></svg></button><button class="on axis"><svg><use href="#ring"/></svg><b>P</b></button><button><svg fill="#161616"><use href="#dots"/></svg></button></div>
          <div class="tools"><button class="on"><svg><use href="#film"/></svg></button></div>
        </div>

        <div class="bottom">
          <section class="panel materials">
            <nav class="panelmenu"><i class="grip"></i><button>创建</button><button>编辑</button><button>功能</button><button>纹理</button></nav>
          </section>
          <section class="panel coords">
            <header><i class="grip"></i><span>位置</span><span>尺寸</span><span>旋转</span></header>
            <div class="coordgrid">
              <label for="px">X</label><span class="field"><input id="px" value="0 cm"><svg><use href="#spin"/></svg></span>
              <label for="sx">X</label><span class="field"><input id="sx" value="0 cm"><svg><use href="#spin"/></svg></span>
              <label for="rh">H</label><span class="field"><input id="rh" value="0 °"><svg><use href="#spin"/></svg></span>
              <label for="py">Y</label><span class="field"><input id="py" value="0 cm"><svg><use href="#spin"/></svg></span>
              <label for="sy">Y</label><span class="field"><input id="sy" value="0 cm"><svg><use href="#spin"/></svg></span>
              <label for="rp">P</label><span class="field"><input id="rp" value="0 °"><svg><use href="#spin"/></svg></span>
              <label for="pz">Z</label><span class="field"><input id="pz" value="0 cm"><svg><use href="#spin"/></svg></span>
              <label for="sz">Z</label><span class="field"><input id="sz" value="0 cm"><svg><use href="#spin"/></svg></span>
              <label for="rb">B</label><span class="field"><input id="rb" value="0 °"><svg><use href="#spin"/></svg></span>
              <i></i><span class="select"><select aria-label="坐标模式"><option>对象 (相对)</option></select><svg><use href="#drop"/></svg></span>
              <i></i><span class="select off"><select aria-label="尺寸模式" disabled><option>绝对尺寸</option></select><svg><use href="#drop"/></svg></span>
              <i></i><button class="apply">应用</button>
            </div>
          </section>
        </div>
      </div>
    </div>
    <footer class="status"><i class="grip"></i></footer>
  </div>

  <div class="managers">
    <div class="dock objects">
      <section class="panel">
        <nav class="panelmenu"><i class="grip"></i><button>文件</button><button>编辑</button><button>查看</button><button>对象</button><button>标签</button><button>书签</button>
          <svg class="i16 push"><use href="#find"/></svg><svg class="i16"><use href="#home"/></svg><svg class="i16"><use href="#eye"/></svg><svg class="i16"><use href="#plus"/></svg></nav>
        <table>
          <colgroup><col class="c-name"><col class="c-flag"><col></colgroup>
          <tr><td><span class="obj"><svg><use href="#o-trace"/></svg>追踪对象</span></td><td><span class="flags"><svg class="i12"><use href="#o-slash"/></svg><svg class="vis"><use href="#o-vis"/></svg><svg class="ok"><use href="#o-ok"/></svg></span></td><td></td></tr>
          <tr><td><span class="obj"><svg><use href="#o-null"/></svg>空白</span></td><td><span class="flags"><svg class="i12"><use href="#o-slash"/></svg><svg class="vis"><use href="#o-vis"/></svg></span></td><td><span class="tags"><svg><use href="#o-xp"/></svg></span></td></tr>
          <tr><td><span class="obj"><svg><use href="#o-shade"/></svg>着色</span></td><td><span class="flags"><svg class="i12"><use href="#o-slash"/></svg><svg class="vis"><use href="#o-vis"/></svg><svg class="ok"><use href="#o-ok"/></svg></span></td><td></td></tr>
          <tr><td><span class="obj"><svg><use href="#o-matrix"/></svg>矩阵</span></td><td><span class="flags"><svg class="i12"><use href="#o-slash"/></svg><svg class="vis"><use href="#o-vis"/></svg><svg class="ok"><use href="#o-ok"/></svg></span></td><td></td></tr>
          <tr><td><span class="obj open"><svg><use href="#o-plane"/></svg>平面</span></td><td><span class="flags"><svg class="i12"><use href="#o-slash"/></svg><svg class="vis red"><use href="#o-vis"/></svg><svg class="ok"><use href="#o-ok"/></svg></span></td><td><span class="tags"><svg><use href="#o-balls"/></svg></span></td></tr>
          <tr><td><span class="obj child"><svg><use href="#o-disp"/></svg>置换</span></td><td><span class="flags"><svg class="i12"><use href="#o-slash"/></svg><svg class="vis"><use href="#o-vis"/></svg><svg class="ok"><use href="#o-ok"/></svg></span></td><td></td></tr>
          <tr><td><span class="obj last"><svg><use href="#o-tri"/></svg>平面</span></td><td><span class="flags"><svg class="i12"><use href="#o-slash"/></svg><svg class="vis red"><use href="#o-vis"/></svg></span></td><td><span class="tags"><svg><use href="#o-balls"/></svg><svg class="chk"><use href="#o-chk"/></svg></span></td></tr>
        </table>
        <div class="void"></div>
      </section>
      <nav class="sidetabs"><button class="active">对象</button><button>场次</button><button>内容浏览器</button><button>构造</button></nav>
      <svg class="badge" viewBox="0 0 50 50"><circle cx="25" cy="25" r="23.500" fill="#fff" stroke="#2b82c4" stroke-width="2"/><circle cx="25" cy="25" r="20.500" fill="none" stroke="#111" stroke-width="1.200"/><path d="M20 16l5 2 5-2 4 1-4 3-2 7-3 4-3-4-2-7-4-3z" fill="#111"/><path d="M21 17c-6-1-7-5-6-9M17 14l-5-3M29 17c6-1 7-5 6-9M33 14l5-3M18 15l1-5M32 15l-1-5" stroke="#111" stroke-width="1.600" fill="none"/><text x="25" y="40" text-anchor="middle">野鹿志</text></svg>
    </div>

    <div class="dock attrs">
      <section class="panel">
        <nav class="panelmenu"><i class="grip"></i><button>模式</button><button>编辑</button><button>用户数据</button>
          <svg class="i16 push"><use href="#tri-l"/></svg><svg class="i16"><use href="#tri-ghost"/></svg><svg class="i16 far"><use href="#tri-up"/></svg><svg class="i16 far"><use href="#find"/></svg><svg class="i16 far"><use href="#lock"/></svg><svg class="i16"><use href="#target"/></svg><svg class="i16"><use href="#plus"/></svg></nav>
        <div class="attrbody">
          <h2><svg><use href="#tp"/></svg>粒子死亡 [粒子死亡]</h2>
          <div class="segments"><button>基本</button><button class="active">参数</button></div>
          <h3>参数</h3>
          <div class="param"><input type="radio" name="p-time" aria-label="时间关键帧"><label for="a-time">时间</label><span class="field"><input id="a-time" value="0"><svg><use href="#spin"/></svg></span></div>
          <div class="param"><input type="radio" name="p-var" aria-label="变化关键帧"><label for="a-var">变化</label><span class="field"><input id="a-var" value="0 %"><svg><use href="#spin"/></svg></span></div>
        </div>
      </section>
      <nav class="sidetabs"><button class="active">属性</button><button>层</button></nav>
    </div>
  </div>
</main>

<section class="window" aria-label="XPresso 编辑器">
  <header class="wintitle">
    <svg class="i16"><use href="#c4d"/></svg><h2>XPresso 编辑器</h2>
    <button aria-label="最小化"><svg class="i12"><use href="#min"/></svg></button>
    <button aria-label="最大化"><svg class="i12"><use href="#max"/></svg></button>
    <button aria-label="关闭"><svg class="i12"><use href="#close"/></svg></button>
  </header>
  <nav class="winmenu"><i class="grip"></i><button>文件</button><button>编辑</button><button>布局</button><button>视图</button><button>自定义</button><button>计算</button></nav>
  <div class="winbody">
    <aside class="pool">
      <div class="tabs"><button>X-管理器</button><button class="active">XPresso 池</button></div>
      <div class="poolmenu"><i class="grip"></i><button>编辑</button><svg class="i16 push"><use href="#find"/></svg></div>
      <div class="poolbody">
        <ul class="tree">
          <li class="l0 open"><span>系统运算器</span><svg><use href="#xp"/></svg></li>
          <li class="l1 open"><span>XPresso</span><svg><use href="#xp"/></svg></li>
          <li class="l2"><span>常规</span><svg><use href="#xp"/></svg></li>
          <li class="l2"><span>适配</span><svg><use href="#xp"/></svg></li>
          <li class="l2"><span>布尔</span><svg><use href="#xp"/></svg></li>
          <li class="l2"><span>计算</span><svg><use href="#xp"/></svg></li>
          <li class="l2"><span>脚本</span><svg><use href="#xp"/></svg></li>
          <li class="l2"><span>逻辑</span><svg><use href="#xp"/></svg></li>
          <li class="l2"><span>迭代器</span><svg><use href="#xp"/></svg></li>
          <li class="l2"><span>TurbulenceFD</span><svg><use href="#xp"/></svg></li>
          <li class="l1"><span>毛发</span><svg><use href="#xp"/></svg></li>
          <li class="l1"><span>运动图形</span><svg><use href="#xp"/></svg></li>
          <li class="l1"><span>动力学</span><svg><use href="#xp"/></svg></li>
          <li class="l1 open"><span>Thinking Particles</span><svg><use href="#xp"/></svg></li>
          <li class="l2"><span>TP 创建体</span><svg><use href="#xp"/></svg></li>
          <li class="l2"><span>TP 状态项</span><svg><use href="#xp"/></svg></li>
          <li class="l2"><span>TP 生成器</span><svg><use href="#xp"/></svg></li>
          <li class="l2 open"><span>TP 标准项</span><svg><use href="#xp"/></svg></li>
          <li class="l3"><span>粒子对象外形</span><svg><use href="#tp"/></svg></li>
          <li class="l3"><span>粒子对齐</span><svg><use href="#tp"/></svg></li>
          <li class="l3"><span>粒子尺寸</span><svg><use href="#tp"/></svg></li>
          <li class="l3"><span>粒子数据设置</span><svg><use href="#tp"/></svg></li>
          <li class="l3"><span>粒子旋转</span><svg><use href="#tp"/></svg></li>
          <li class="l3 chosen"><span>粒子死亡</span><svg><use href="#tp"/></svg></li>
          <li class="l3"><span>粒子滚动</span><svg><use href="#tp"/></svg></li>
          <li class="l3"><span>粒子缩放</span><svg><use href="#tp"/></svg></li>
          <li class="l3"><span>粒子群组</span><svg><use href="#tp"/></svg></li>
          <li class="l3 end"><span>粒子质量</span><svg><use href="#tp"/></svg></li>
          <li class="l2"><span>TP 动态项</span><svg><use href="#xp"/></svg></li>
          <li class="l2 open"><span>TP 辅助体</span><svg><use href="#xp"/></svg></li>
          <li class="l3"><span>粒子体积位置</span><svg><use href="#tp"/></svg></li>
          <li class="l3"><span>粒子定时器</span><svg><use href="#tp"/></svg></li>
          <li class="l3"><span>粒子群组</span><svg><use href="#tp"/></svg></li>
          <li class="l3"><span>粒子自转转换</span><svg><use href="#tp"/></svg></li>
          <li class="l3"><span>粒子获取数据</span><svg><use href="#tp"/></svg></li>
        </ul>
        <div class="scroll"><i class="up"></i><i class="thumb"></i><i class="dn"></i></div>
      </div>
    </aside>

    <section class="graph">
      <header><span>群组</span><svg viewBox="0 0 34 18"><path d="M7 1l3 3H8v2H6V4H4zM7 17l3-3H8v-2H6v2H4zM-1 9l3-3v2h2v2H2v2zM15 9l-3-3v2h-2v2h2v2zM22 0l4 4h-3v7h5l-6 7-6-7h5V4h-3z" fill="#161616"/></svg></header>
      <div class="canvas">
        <svg class="wires" viewBox="349 151 862 700" width="862" height="700">
          <path d="M533 175C577 175 577 178 621 178"/><path d="M544 231C583 231 583 230 622 230"/><path d="M716 352C741 352 741 256 766 256"/><path d="M500 380C545 380 545 352 591 352"/><path d="M500 416C742 416 742 403 984 403"/><path d="M858 264C921 264 921 369 984 369"/><path d="M952 485C980 485 980 508 1008 508"/><path d="M953 566C980 566 980 527 1008 527"/><path d="M775 530C803 530 803 475 831 475"/><path d="M775 530C803 530 803 556 832 556"/><path d="M624 553C646 553 646 550 669 550"/><path d="M501 687C526 687 504 553 530 553"/>
        </svg>
        <article class="node n-event"><header>粒子事件波动</header><div class="body"><div class="out"><p class="on">粒子生成</p></div></div></article>
        <article class="node n-group"><header>粒子群组</header><div class="body"><div class="in"><p class="on"></p></div><em>粒子</em></div></article>
        <article class="node n-pass"><header>粒子传递</header><div class="body"><em>粒子</em><div class="out"><p class="on"></p></div></div></article>
        <article class="node n-rate"><header>粒子速率</header><div class="body"><div class="in"><p class="on">粒子</p></div></div></article>
        <article class="node n-matrix"><header>矩阵到矢量</header><div class="body"><div class="in"><p class="on">矩阵</p></div><div class="out"><p>偏移</p><p>V1</p><p class="on">V2</p><p>V3</p></div></div></article>
        <article class="node n-get"><header>粒子获取数据</header><div class="body"><div class="in"><p class="on">粒子</p></div><div class="out"><p class="on">对齐</p></div></div></article>
        <article class="node n-ab"><header>粒子传递 AB</header><div class="body loose"><em>A:方向 B:粒子</em><div class="out"><p class="on"></p><p class="on"></p></div></div></article>
        <article class="node n-rate2"><header>粒子速率</header><div class="body loose"><div class="in"><p class="on">方向</p><p class="on">粒子</p></div></div></article>
        <article class="node n-cmp"><header>比较</header><div class="body tight"><div class="in"><p class="on">输入 1</p><p>输入 2</p></div><div class="out"><p class="on">输出</p></div></div></article>
        <article class="node n-cmp2"><header>比较</header><div class="body tight"><div class="in"><p class="on">输入 1</p><p>输入 2</p></div><div class="out"><p class="on">输出</p></div></div></article>
        <article class="node n-add"><header>数学:加</header><div class="body tight"><div class="in"><p class="on">输入</p><p class="on">输入</p></div><div class="out"><p>输出</p></div></div></article>
        <article class="node n-real"><header>矢量到实数</header><div class="body"><div class="in"><p class="on">输入</p></div><div class="out"><p class="on">X</p><p>Y</p><p>Z</p></div></div></article>
        <article class="node n-get2"><header>粒子获取数据</header><div class="body"><div class="in"><p class="on">粒子</p></div><div class="out"><p class="on">位置</p></div></div></article>
        <article class="node n-pass2"><header>粒子传递</header><div class="body"><em>粒子</em><div class="out"><p class="on"></p></div></div></article>
        <article class="node n-die active"><header>粒子死亡</header><div class="body"><div class="in"><p></p></div></div></article>
        <menu class="popup"><button>动画时间</button><button>变化</button><button class="hover">开启</button><button>时间</button><button disabled>粒子</button></menu>
        <svg class="marks" viewBox="349 151 862 700" width="862" height="700"><path d="M948 724h97v33h-97z" fill="none" stroke="#ee1c24" stroke-width="2"/><path d="M890 787.500L930 756" stroke="#ee1c24" stroke-width="2.500"/><path d="M938 750l-6 12-3-5-4-3z" fill="#ee1c24"/></svg>
      </div>
      <footer>粒子死亡</footer>
    </section>
  </div>
</section>
</body>
</html>
```

FILE: styles.css
```css
*, *::before, *::after { box-sizing: border-box; }
body {
  margin: 0;
  height: 100vh;
  display: flex;
  flex-direction: column;
  position: relative;
  overflow: hidden;
  background: #474747;
  color: #b8b8b8;
  font: 11px/16px "Noto Sans", "Noto Sans CJK SC", sans-serif;
}
.sprite { position: absolute; }
svg { display: block; flex: none; }
button, input, select { font: inherit; color: inherit; }
button { padding: 0; border: 0; background: none; white-space: nowrap; }
h1, h2, h3, p, ul, menu { margin: 0; padding: 0; font-weight: 400; }
.i12 { width: 12px; height: 12px; }
.i16 { width: 16px; height: 16px; }
.push { margin-left: auto; }

.grip {
  flex: none;
  width: 12px;
  height: 12px;
  background: radial-gradient(circle at 1px 1px, #a4a4a4 0 1px, transparent 1px) 0 0 / 3px 3px;
}
.grip.tall { width: 6px; height: 26px; }
.grip.wide { width: 26px; height: 6px; }

/* title and menu bars */
.titlebar {
  flex: none;
  height: 23px;
  display: flex;
  align-items: center;
  padding: 0 18px 0 2px;
  background: #fff;
  color: #8c8c8c;
}
.titlebar h1 { flex: 1; margin-left: 5px; font-size: 13px; }
.titlebar button { width: 46px; height: 23px; display: flex; align-items: center; justify-content: flex-end; color: #888; }
.menubar { flex: none; height: 28px; display: flex; align-items: center; gap: 14px; padding: 0 2px 4px 8px; }
.menubar .hot { color: #eff09a; }
.menubar label { margin-right: -9px; }
.menubar > svg { margin-left: -10px; }

.select { display: flex; align-items: center; position: relative; height: 18px; }
.select select {
  appearance: none;
  width: 100%;
  height: 18px;
  padding: 0 7px;
  border: 1px solid #303030;
  border-radius: 4px;
  background: linear-gradient(#747474, #5e5e5e);
  color: #d0d0d0;
  opacity: 1;
}
.select svg { position: absolute; right: 4px; width: 10px; height: 6px; color: #d0d0d0; }
.select.off select { background: #505050; border-color: #444; color: #7c7c7c; }
.select.off svg { color: #6e6e6e; }
.layout { width: 128px; }

.field { display: flex; align-items: center; position: relative; }
.field input {
  width: 100%;
  height: 20px;
  padding: 0 5px;
  border: 1px solid #262626;
  border-right-color: #6a6a6a;
  border-bottom-color: #6a6a6a;
  background: #343434;
  color: #b8b8b8;
}
.field svg { position: absolute; right: 1px; width: 7px; height: 12px; }

/* workspace */
.workspace { flex: 1; min-height: 0; display: grid; grid-template-columns: 1267fr 653fr; grid-template-rows: minmax(0, 1fr); }
.stage { display: flex; flex-direction: column; min-height: 0; }
.toolbar { flex: none; display: flex; gap: 10px; height: 36px; padding-top: 1px; align-items: flex-start; }
.toolbar .grip { margin: 4px -8px 0 0; }
.toolbar .near { margin-left: -7px; }
.tools {
  display: flex;
  flex: none;
  overflow: hidden;
  border-radius: 4px;
  background: #6b6b6b;
  box-shadow: 0 0 0 1px #2a2a2a;
}
.tools button {
  flex: none;
  position: relative;
  width: 36px;
  height: 34px;
  display: flex;
  align-items: center;
  justify-content: center;
  border-right: 1px solid #505050;
}
.tools button:last-child { border-color: transparent; }
.tools svg { width: 34px; height: 34px; }
.tools .on { background: #8fa8d2; }
.axis b { position: absolute; font-size: 20px; font-weight: 800; color: #161616; }
.tools .psr { display: block; font-size: 15px; line-height: 17px; font-weight: 800; color: #f6b01c; }
.psr b { display: block; text-align: right; padding-right: 6px; color: #ddd; }

.deck { flex: 1; min-height: 0; display: flex; }
.rail { display: flex; flex-direction: column; align-items: center; gap: 2px; width: 35px; margin-right: 5px; }
.rail .tools { flex-direction: column; }
.rail .tools button { width: 34px; height: 36px; border-right: 0; border-bottom: 1px solid #505050; }
.rail .tools button:last-child { border-color: transparent; }
.first { margin: 3px 4px 0 1px; }
.first .apart { margin-top: 8px; }
.brand {
  margin-top: auto;
  margin-bottom: 7px;
  display: flex;
  writing-mode: vertical-rl;
  flex-direction: column;
  transform: rotate(180deg);
  color: #9a9a9a;
  white-space: nowrap;
}
.brand strong { font: italic 800 16px/18px "Open Sans", sans-serif; }
.brand span { font: 15px/18px Lato, sans-serif; }

.center { flex: 1; min-width: 0; display: flex; flex-direction: column; }
.subbar { flex: none; display: flex; align-items: flex-start; gap: 4px; padding-top: 4px; height: 43px; }
.subbar .grip { margin: 4px -1px 0 0; }
.subbar .tools button { width: 34px; }
.middle { flex: 1 1 0; min-height: 0; overflow: hidden; display: flex; }
.middle .grip.wide { margin-bottom: -1px; }
.right { width: 62px; margin: 0 1px 0 0; }
.right .tools button { width: 60px; justify-content: flex-start; padding-left: 12px; }
.right .tools button .cog { width: 13px; height: 13px; color: #161616; }
.right .tools button .dim { color: #7c7c7c; }
.viewport { flex: 1; display: flex; flex-direction: column; border-left: 1px solid #707070; border-top: 1px solid #707070; }
.viewport header { height: 22px; padding: 4px; }
.view { flex: 1; margin-bottom: 2px; border: 1px solid #c8c8c8; background: linear-gradient(#5e5e5e, #858585 35%, #6c6c6c 36%, #5a5a5a); }
.view span { display: inline-block; margin: 3px 2px; padding: 0 2px; border-radius: 3px; background: #5c5c5c; color: #ddd; }

.timeline { flex: none; display: flex; gap: 2px; margin-top: 4px; }
.timeline .grip, .transport .grip { height: 20px; margin-top: 2px; }
.ruler { flex: 1; height: 22px; padding: 0 4px; border: 1px solid #242424; border-radius: 3px; background: #343434; }
.ruler span { display: inline-block; height: 20px; border-left: 1px solid #aaa; line-height: 14px; }
.frame { width: 66px; margin-right: 1px; }

.transport { flex: none; display: flex; align-items: flex-start; margin-top: 5px; padding-right: 1px; }
.transport .field { margin: 3px 0 0 2px; width: 67px; }
.transport .tools { margin-left: 11px; }
.transport .tools button { width: 28px; height: 26px; }
.transport .tools svg { width: 26px; height: 26px; }
.transport .axis b { font-size: 14px; }
.range {
  flex: 1;
  display: flex;
  align-items: center;
  gap: 6px;
  height: 19px;
  margin: 3px 4px 0 6px;
  padding: 0 5px;
  border: 1px solid #2c2c2c;
  border-radius: 4px;
  background: linear-gradient(#5c5c5c, #6a6a6a);
  color: #262626;
}
.range span:last-of-type { margin-left: auto; }
.nib { border: 5px solid transparent; border-left: 0; border-right: 7px solid #c8c8c8; }
.nib.end { transform: rotate(180deg); }

.panel { border: 1px solid #6a6a6a; border-right-color: #333; border-bottom-color: #333; }
.panelmenu { flex: none; display: flex; align-items: center; gap: 14px; height: 25px; padding: 0 1px 0 5px; border-bottom: 2px solid #333; box-shadow: 0 1px #6a6a6a; }
.panelmenu .grip { margin-right: -6px; }
.panelmenu svg { margin-left: -11px; }
.panelmenu svg.push { margin-left: auto; }
.bottom { flex: none; display: flex; gap: 3px; height: 120px; margin: 4px 0 3px; }
.materials { flex: 1; }
.coords { width: 300px; }
.coords header { display: grid; grid-template-columns: 20px 93px 93px 1fr; align-items: center; height: 21px; padding-left: 4px; border-bottom: 1px solid #333; box-shadow: 0 1px #6a6a6a; }
.coordgrid { display: grid; grid-template-columns: 8px 84px 8px 84px 10px 1fr; gap: 3px; padding: 5px 4px 0 3px; align-items: center; }
.apply { height: 18px; border: 1px solid #303030; border-radius: 8px; background: linear-gradient(#747474, #5e5e5e); color: #d0d0d0; }
.status { flex: none; height: 20px; border: 1px solid #6a6a6a; border-right-color: #333; border-bottom-color: #333; padding: 3px; }

/* right-hand managers */
.managers { display: grid; grid-template-rows: minmax(0, 478fr) minmax(0, 505fr); gap: 4px; min-height: 0; padding: 0 0 1px 3px; }
.dock { display: flex; position: relative; }
.dock > .panel { flex: 1; display: flex; flex-direction: column; }
.sidetabs { width: 23px; display: flex; flex-direction: column; }
.sidetabs button {
  padding: 6px 3px;
  border: 1px solid #2c2c2c;
  border-left: 0;
  border-radius: 0 3px 3px 0;
  background: #343434;
  color: #707070;
  writing-mode: vertical-rl;
  text-orientation: sideways;
}
.sidetabs .active { background: linear-gradient(90deg, #555, #6e6e6e); color: #f5a81c; }

table { width: 100%; margin-top: 1px; border-collapse: collapse; table-layout: fixed; }
.c-name { width: 86px; }
.c-flag { width: 39px; }
td { height: 20px; padding: 0; border-right: 2px solid #383838; }
tr:nth-child(odd) { background: #4e4e4e; }
td:first-child { background: #fff1; }
.obj {
  display: flex;
  align-items: center;
  gap: 3px;
  height: 20px;
  padding-left: 16px;
  background: linear-gradient(#909090, #909090) 8px 0 / 1px 100% no-repeat, linear-gradient(#909090, #909090) 8px 10px / 8px 1px no-repeat;
  white-space: nowrap;
}
.obj svg { width: 16px; height: 16px; }
.obj.open { background: linear-gradient(#909090, #909090) 4px 6px / 9px 1px no-repeat, linear-gradient(#909090, #909090) 4px 14px / 9px 1px no-repeat, linear-gradient(#909090, #909090) 4px 6px / 1px 9px no-repeat, linear-gradient(#909090, #909090) 12px 6px / 1px 9px no-repeat, linear-gradient(#909090, #909090) 6px 10px / 5px 1px no-repeat, linear-gradient(#909090, #909090) 8px 0 / 1px 6px no-repeat, linear-gradient(#909090, #909090) 8px 15px / 1px 5px no-repeat; }
.obj.child { padding-left: 27px; background: linear-gradient(#909090, #909090) 8px 0 / 1px 100% no-repeat, linear-gradient(#909090, #909090) 19px 0 / 1px 10px no-repeat, linear-gradient(#909090, #909090) 19px 10px / 7px 1px no-repeat; }
.obj.last { color: #f5c01c; background: linear-gradient(#909090, #909090) 8px 0 / 1px 10px no-repeat, linear-gradient(#909090, #909090) 8px 10px / 8px 1px no-repeat; }
.flags { display: flex; align-items: center; gap: 4px; padding-left: 3px; }
.vis { width: 6px; height: 14px; fill: #757575; }
.vis.red { fill: #e25050; }
.ok { width: 10px; height: 12px; margin-left: -2px; }
.tags { display: flex; align-items: center; gap: 4px; }
.tags svg { width: 18px; height: 18px; }
.tags .chk { width: 15px; height: 15px; }
.void { flex: 1; background: linear-gradient(#383838, #383838) 84px 0 / 2px 100% no-repeat, linear-gradient(#383838, #383838) 123px 0 / 2px 100% no-repeat; }
.badge { position: absolute; width: 50px; height: 50px; left: 520px; top: 321px; font: 700 7px "Noto Sans CJK SC", sans-serif; }

.panelmenu .far { margin-left: -7px; }
.attrbody { padding: 3px 4px 0 3px; }
.attrbody h2 { display: flex; align-items: center; gap: 5px; height: 19px; padding-left: 2px; font-size: 11px; }
.attrbody h2 svg { width: 18px; height: 18px; }
.segments { display: flex; margin: 4px 0 6px; }
.segments button { width: 30px; height: 20px; border: 1px solid #2c2c2c; border-radius: 3px 0 0 3px; background: #6b6b6b; color: #ccc; }
.segments .active { border-radius: 0 3px 3px 0; background: #8fa8d2; color: #111; }
.attrbody h3 { height: 18px; margin-bottom: 5px; padding-left: 1px; background: #333; font-size: 11px; line-height: 18px; }
.param { display: flex; align-items: center; gap: 4px; margin-bottom: 3px; padding-left: 1px; }
.param > input { appearance: none; width: 15px; height: 15px; margin: 0; border: 3px solid #777; border-radius: 50%; background: #888; box-shadow: inset 0 0 0 2px #262626; }
.param .field { width: 66px; }

/* XPresso window */
.window {
  position: absolute;
  left: 97px;
  top: 74px;
  right: calc(100% * 653 / 1920 + 43px);
  bottom: 168px;
  display: flex;
  flex-direction: column;
  border: 1px solid #1c83d8;
  background: #474747;
  box-shadow: 0 0 12px #0008;
}
.wintitle { flex: none; display: flex; align-items: center; height: 30px; padding: 0 17px 0 7px; background: #fff; color: #000; }
.wintitle h2 { flex: 1; margin-left: 5px; font-size: 12px; }
.wintitle button { width: 46px; height: 30px; display: flex; align-items: center; justify-content: flex-end; }
.winmenu { flex: none; display: flex; align-items: center; gap: 14px; height: 25px; padding: 0 5px; border-bottom: 2px solid #333; background: #6a6a6a; color: #b4b4b4; }
.winmenu .grip { margin-right: -6px; }
.winbody { flex: 1; min-height: 0; display: flex; gap: 3px; }
.pool { width: 237px; display: flex; flex-direction: column; }
.tabs { display: flex; flex: none; padding-top: 1px; height: 23px; }
.tabs button { width: 56px; border-radius: 4px 4px 0 0; background: #343434; color: #787878; }
.tabs .active { width: 66px; background: #6a6a6a; color: #f5a81c; }
.poolmenu { flex: none; display: flex; align-items: center; gap: 9px; height: 27px; padding: 0 1px 2px 5px; border-top: 1px solid #707070; border-bottom: 2px solid #333; }
.poolbody { flex: 1; min-height: 0; display: flex; border-bottom: 1px solid #777; }
.tree { flex: 1; overflow: hidden; list-style: none; border-left: 1px solid #333; }
.tree li {
  --v: linear-gradient(#8a8a8a, #8a8a8a);
  position: relative;
  display: flex;
  align-items: center;
  height: 20px;
  color: #bcbcbc;
}
.tree li::before { content: ""; flex: none; width: 5px; height: 1px; margin-right: 1px; background: #8a8a8a; }
.tree li::after { content: ""; position: absolute; top: 6px; border: 4px solid transparent; border-left: 5px solid #161616; border-right: 0; }
.tree li.open::after { top: 8px; margin-left: -2px; border: 4px solid transparent; border-top: 5px solid #161616; border-bottom: 0; }
.tree li span { flex: 1; white-space: nowrap; }
.tree li svg { width: 13px; height: 13px; margin-right: 59px; }
.tree .l0 { padding-left: 15px; background: var(--v) 12px 0 / 1px 100% no-repeat; }
.tree .l0::after { left: 10px; }
.tree .l1 { padding-left: 31px; background: var(--v) 12px 0 / 1px 100% no-repeat, var(--v) 28px 0 / 1px 100% no-repeat; }
.tree .l1::after { left: 26px; }
.tree .l2 { padding-left: 47px; background: var(--v) 12px 0 / 1px 100% no-repeat, var(--v) 28px 0 / 1px 100% no-repeat, var(--v) 44px 0 / 1px 100% no-repeat; }
.tree .l2::after { left: 42px; }
.tree .l3 { padding-left: 60px; background: var(--v) 12px 0 / 1px 100% no-repeat, var(--v) 28px 0 / 1px 100% no-repeat, var(--v) 44px 0 / 1px 100% no-repeat, var(--v) 60px 0 / 1px 100% no-repeat; }
.tree .l3.end { background: var(--v) 12px 0 / 1px 100% no-repeat, var(--v) 28px 0 / 1px 100% no-repeat, var(--v) 44px 0 / 1px 100% no-repeat, var(--v) 60px 0 / 1px 10px no-repeat; }
.tree .l3::before { width: 8px; }
.tree .l3::after { display: none; }
.tree .chosen { color: #f5a81c; }
.tree .l3.chosen::after { display: block; left: 44px; top: -3px; width: 137px; height: 24px; border: 2px solid #ee1c24; }
.scroll { width: 12px; margin-right: 4px; display: flex; flex-direction: column; align-items: center; background: #333; border-right: 1px solid #5c5c5c; }
.scroll .up { margin: 2px 0; border: 4px solid transparent; border-top: 0; border-bottom: 8px solid #8a8a8a; }
.scroll .thumb { flex: 0 1 546px; width: 9px; border-radius: 4px; background: #686868; }
.scroll .dn { margin: auto 0 3px; border: 4px solid transparent; border-bottom: 0; border-top: 8px solid #8a8a8a; }

.graph { flex: 1; display: flex; flex-direction: column; padding-top: 3px; }
.graph > header {
  flex: none;
  display: flex;
  align-items: center;
  height: 18px;
  padding: 0 7px 0 12px;
  background: linear-gradient(90deg, #3470b0 11px, #606163 11px calc(100% - 12px), #cf6466 calc(100% - 12px));
  color: #fff;
}
.graph > header span { flex: 1; text-align: center; }
.graph > header svg { width: 34px; height: 18px; overflow: visible; }
.canvas {
  flex: 1;
  position: relative;
  overflow: hidden;
  border-left: 11px solid #606163;
  border-right: 12px solid #606163;
  background: linear-gradient(#808080 1px, transparent 1px) 0 1px / 16px 16px, linear-gradient(90deg, #808080 1px, transparent 1px) 1px 0 / 16px 16px, #868686;
}
.graph > footer { flex: none; height: 20px; padding: 1px 6px; border-top: 2px solid #333; line-height: 18px; box-shadow: inset 0 1px #6a6a6a; }
.wires, .marks { position: absolute; left: 0; top: 0; }
.wires path { fill: none; stroke: #b0b0b0; }

.node {
  position: absolute;
  display: flex;
  flex-direction: column;
  overflow: hidden;
  border: 1px solid #333;
  border-radius: 4px;
}
.node header {
  flex: none;
  height: 18px;
  line-height: 18px;
  text-align: center;
  color: #fff;
  white-space: nowrap;
  background: linear-gradient(90deg, #3470b0 11px, #606163 11px calc(100% - 11px), #cf6466 calc(100% - 11px));
}
.node .body {
  flex: 1;
  display: grid;
  align-items: center;
  padding-bottom: 2px;
  color: #d0d0d0;
  background: linear-gradient(90deg, #606163 11px, #48484a 11px calc(100% - 11px), #606163 calc(100% - 11px));
}
.body > * { grid-area: 1 / 1; }
.body em { font-style: normal; text-align: center; }
.body p { display: flex; align-items: center; gap: 4px; height: 20px; padding: 0 1px; white-space: nowrap; }
.tight p { height: 19px; }
.loose p { height: 35px; }
.body p::before { content: ""; width: 9px; height: 9px; border: 1px solid #a0a0a0; border-radius: 50%; }
.body p.on::before { background: radial-gradient(#d8d8d8 0 2px, #606163 4px); }
.body .out p { flex-direction: row-reverse; }
.node.active { border-color: #f5a81c; }
.n-event { left: 90px; top: -5px; width: 94px; height: 41px; }
.n-group { left: 272px; top: -1px; width: 72px; height: 39px; }
.n-pass { left: 123px; top: 52px; width: 72px; height: 39px; }
.n-rate { left: 273px; top: 49px; width: 72px; height: 42px; }
.n-matrix { left: 417px; top: 41px; width: 92px; height: 108px; }
.n-get { left: 242px; top: 149px; width: 125px; height: 87px; }
.n-ab { left: 56px; top: 181px; width: 95px; height: 115px; }
.n-rate2 { left: 635px; top: 172px; width: 72px; height: 109px; }
.n-cmp { left: 482px; top: 293px; width: 121px; height: 64px; }
.n-cmp2 { left: 483px; top: 374px; width: 121px; height: 64px; }
.n-add { left: 659px; top: 326px; width: 92px; height: 64px; }
.n-real { left: 320px; top: 347px; width: 106px; height: 87px; }
.n-get2 { left: 181px; top: 364px; width: 94px; height: 60px; }
.n-pass2 { left: 64px; top: 508px; width: 88px; height: 39px; }
.n-die { left: 599px; top: 519px; width: 118px; height: 43px; }

.popup {
  position: absolute;
  left: 606px;
  top: 529px;
  width: 64px;
  display: flex;
  flex-direction: column;
  padding: 2px;
  border: 1px solid #222;
  background: #474747;
}
.popup button { height: 23px; padding-left: 6px; text-align: left; color: #b8b8b8; }
.popup .hover { background: #999; color: #000; }
.popup button:disabled { color: #808080; }
```
